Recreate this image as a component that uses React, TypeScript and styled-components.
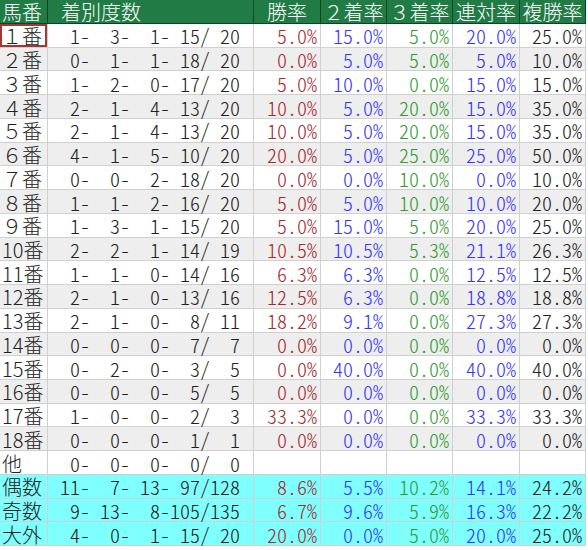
import React from 'react';
import styled, { createGlobalStyle } from 'styled-components';

const GlobalStyle = createGlobalStyle`
  html, body { margin: 0; padding: 0; background: #ffffff; }
`;

const COLS = '47px 205px 66px 65px 65px 66px 65px';
const LINE = '#d0d0d0';

const Table = styled.div`
  width: 586px;
  display: flex;
  flex-direction: column;
  font-family: "Noto Sans CJK JP", "Noto Sans CJK SC", sans-serif;
  font-size: 20px;
  font-weight: 300;
  line-height: 1;
`;

const HeaderRow = styled.div`
  display: grid;
  grid-template-columns: ${COLS};
  column-gap: 1px;
  height: 24px;
  box-sizing: border-box;
  padding: 0 1px 1px 0;
  background: #0f4326;
`;

const HeadCell = styled.div<{ $pad?: number; $center?: boolean }>`
  background: #217b45;
  color: #ffffff;
  display: flex;
  align-items: center;
  justify-content: ${p => (p.$center ? 'center' : 'flex-start')};
  padding-left: ${p => p.$pad ?? 0}px;
  padding-top: 1px;
  white-space: nowrap;
`;

const Body = styled.div`
  display: flex;
  flex-direction: column;
  gap: 1px;
  height: 522px;
  box-sizing: border-box;
  padding-bottom: 1px;
  background: ${LINE};
`;

const Row = styled.div<{ $bg: string }>`
  flex: 1;
  min-height: 0;
  display: grid;
  grid-template-columns: ${COLS};
  column-gap: 1px;
  padding-right: 1px;
  background: ${LINE};
  & > * {
    background: ${p => p.$bg};
  }
`;

const NameCell = styled.div<{ $selected?: boolean }>`
  display: flex;
  align-items: center;
  padding: 2px 0 0 2px;
  color: #222222;
  white-space: pre;
  box-shadow: ${p => (p.$selected ? 'inset 0 0 0 2px #a83434' : 'none')};
`;

const CountCell = styled.div`
  display: flex;
  align-items: center;
  padding: 2px 0 0 2px;
  color: #222222;
  font-feature-settings: "hwid" 1;
`;

const Field = styled.span<{ $w: number }>`
  display: inline-block;
  width: ${p => p.$w}px;
  text-align: right;
`;

const Sep = styled.span`
  display: inline-block;
  width: 10px;
  text-align: left;
`;

const PCT_COLORS: Record<string, string> = {
  win: '#a52a2a',
  blue: '#3535ff',
  green: '#309a30',
  black: '#222222',
};

const PctCell = styled.div<{ $kind: string }>`
  display: flex;
  align-items: center;
  justify-content: flex-end;
  padding: 2px 3px 0 0;
  color: ${p => PCT_COLORS[p.$kind]};
  font-feature-settings: "hwid" 1;
`;

type RowData = {
  name: string;
  c: [number, number, number, number, number];
  p: string[] | null;
  bg: 'white' | 'gray' | 'cyan';
};

const BG = { white: '#ffffff', gray: '#eeeeee', cyan: '#80ffff' };

const rows: RowData[] = [
  { name: '１番', c: [1, 3, 1, 15, 20], p: ['5.0%', '15.0%', '5.0%', '20.0%', '25.0%'], bg: 'white' },
  { name: '２番', c: [0, 1, 1, 18, 20], p: ['0.0%', '5.0%', '5.0%', '5.0%', '10.0%'], bg: 'gray' },
  { name: '３番', c: [1, 2, 0, 17, 20], p: ['5.0%', '10.0%', '0.0%', '15.0%', '15.0%'], bg: 'white' },
  { name: '４番', c: [2, 1, 4, 13, 20], p: ['10.0%', '5.0%', '20.0%', '15.0%', '35.0%'], bg: 'gray' },
  { name: '５番', c: [2, 1, 4, 13, 20], p: ['10.0%', '5.0%', '20.0%', '15.0%', '35.0%'], bg: 'white' },
  { name: '６番', c: [4, 1, 5, 10, 20], p: ['20.0%', '5.0%', '25.0%', '25.0%', '50.0%'], bg: 'gray' },
  { name: '７番', c: [0, 0, 2, 18, 20], p: ['0.0%', '0.0%', '10.0%', '0.0%', '10.0%'], bg: 'white' },
  { name: '８番', c: [1, 1, 2, 16, 20], p: ['5.0%', '5.0%', '10.0%', '10.0%', '20.0%'], bg: 'gray' },
  { name: '９番', c: [1, 3, 1, 15, 20], p: ['5.0%', '15.0%', '5.0%', '20.0%', '25.0%'], bg: 'white' },
  { name: '10番', c: [2, 2, 1, 14, 19], p: ['10.5%', '10.5%', '5.3%', '21.1%', '26.3%'], bg: 'gray' },
  { name: '11番', c: [1, 1, 0, 14, 16], p: ['6.3%', '6.3%', '0.0%', '12.5%', '12.5%'], bg: 'white' },
  { name: '12番', c: [2, 1, 0, 13, 16], p: ['12.5%', '6.3%', '0.0%', '18.8%', '18.8%'], bg: 'gray' },
  { name: '13番', c: [2, 1, 0, 8, 11], p: ['18.2%', '9.1%', '0.0%', '27.3%', '27.3%'], bg: 'white' },
  { name: '14番', c: [0, 0, 0, 7, 7], p: ['0.0%', '0.0%', '0.0%', '0.0%', '0.0%'], bg: 'gray' },
  { name: '15番', c: [0, 2, 0, 3, 5], p: ['0.0%', '40.0%', '0.0%', '40.0%', '40.0%'], bg: 'white' },
  { name: '16番', c: [0, 0, 0, 5, 5], p: ['0.0%', '0.0%', '0.0%', '0.0%', '0.0%'], bg: 'gray' },
  { name: '17番', c: [1, 0, 0, 2, 3], p: ['33.3%', '0.0%', '0.0%', '33.3%', '33.3%'], bg: 'white' },
  { name: '18番', c: [0, 0, 0, 1, 1], p: ['0.0%', '0.0%', '0.0%', '0.0%', '0.0%'], bg: 'gray' },
  { name: '他', c: [0, 0, 0, 0, 0], p: null, bg: 'white' },
  { name: '偶数', c: [11, 7, 13, 97, 128], p: ['8.6%', '5.5%', '10.2%', '14.1%', '24.2%'], bg: 'cyan' },
  { name: '奇数', c: [9, 13, 8, 105, 135], p: ['6.7%', '9.6%', '5.9%', '16.3%', '22.2%'], bg: 'cyan' },
  { name: '大外', c: [4, 0, 1, 15, 20], p: ['20.0%', '0.0%', '5.0%', '20.0%', '25.0%'], bg: 'cyan' },
];

const KINDS = ['win', 'blue', 'green', 'blue', 'black'];

const headers = ['勝率', '２着率', '３着率', '連対率', '複勝率'];

export default function App() {
  return (
    <>
      <GlobalStyle />
      <Table>
        <HeaderRow>
          <HeadCell $pad={2}>馬番</HeadCell>
          <HeadCell $pad={13}>着別度数</HeadCell>
          {headers.map(h => (
            <HeadCell key={h} $center>
              {h}
            </HeadCell>
          ))}
        </HeaderRow>
        <Body>
          {rows.map((r, i) => (
            <Row key={r.name} $bg={BG[r.bg]}>
              <NameCell $selected={i === 0}>{r.name}</NameCell>
              <CountCell>
                <Field $w={30}>{r.c[0]}</Field>
                <Sep>-</Sep>
                <Field $w={30}>{r.c[1]}</Field>
                <Sep>-</Sep>
                <Field $w={30}>{r.c[2]}</Field>
                <Sep>-</Sep>
                <Field $w={30}>{r.c[3]}</Field>
                <Sep>/</Sep>
                <Field $w={30}>{r.c[4]}</Field>
              </CountCell>
              {KINDS.map((k, j) => (
                <PctCell key={j} $kind={k}>
                  {r.p ? r.p[j] : ''}
                </PctCell>
              ))}
            </Row>
          ))}
        </Body>
      </Table>
    </>
  );
}
